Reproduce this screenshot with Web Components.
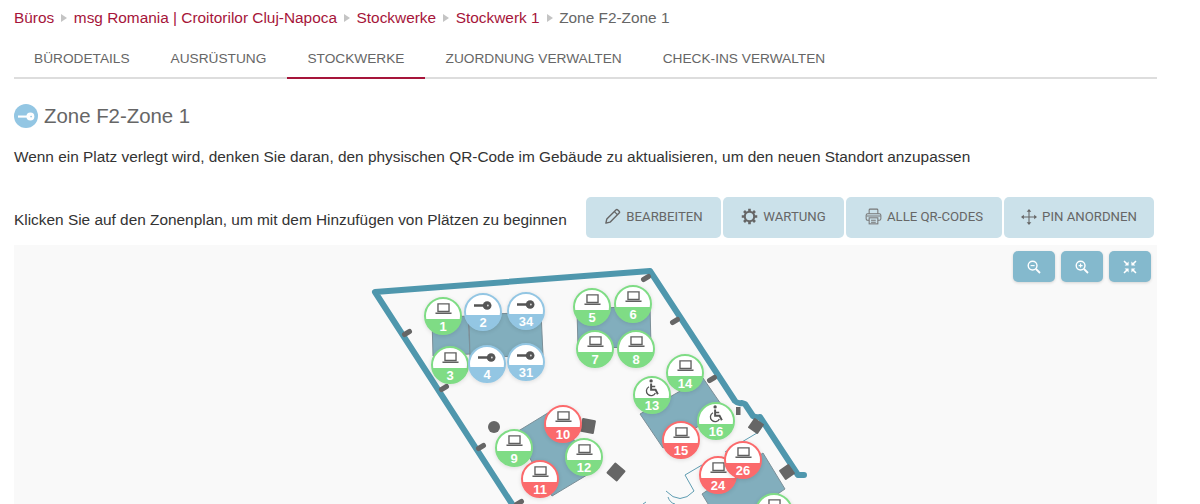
<!DOCTYPE html>
<html>
<head>
<meta charset="utf-8">
<style>
html,body{margin:0;background:#fff;}
body{font-family:"Liberation Sans",Arial,sans-serif;height:504px;overflow:hidden;}
</style>
</head>
<body>
<office-page></office-page>
<script>
const icons = {
    laptop: `<svg viewBox="0 0 20 14" width="17" height="12"><path d="M3.5 1h13v9h-13z" fill="none" stroke="#606060" stroke-width="1.6"/><path d="M0.5 11h19v1.2q0 .8-1 .8h-17q-1 0-1-.8z" fill="#606060"/></svg>`,
    key: `<svg viewBox="0 0 24 12" width="18" height="9"><path d="M0 4.4h13v3.2H0z" fill="#555"/><circle cx="17.5" cy="6" r="5.8" fill="#555"/><circle cx="18.5" cy="6" r="1.2" fill="#ddd"/></svg>`,
    wheel: `<svg viewBox="0 0 18 20" width="16" height="18"><circle cx="8" cy="2" r="1.9" fill="#555"/><path d="M8 5v7h5l2.6 5" fill="none" stroke="#555" stroke-width="2.2"/><path d="M8 8.4h4.6" stroke="#555" stroke-width="1.6"/><path d="M5.6 8.6a5.3 5.3 0 1 0 7.2 7" fill="none" stroke="#555" stroke-width="1.5"/></svg>`,
    pencil: `<svg viewBox="0 0 18 18" width="17" height="17"><path d="M2 16l1-4.4L12.6 2q1-1 2 0l1.4 1.4q1 1 0 2L6.4 15z" fill="none" stroke="#666" stroke-width="1.5" stroke-linejoin="round"/><path d="M11 3.8l3.2 3.2" stroke="#666" stroke-width="1.3"/></svg>`,
    gear: `<svg viewBox="0 0 18 18" width="17" height="17"><circle cx="9" cy="9" r="5" fill="none" stroke="#666" stroke-width="2.2"/><path d="M9 .8v3M9 14.2v3M.8 9h3M14.2 9h3M3.2 3.2l2.1 2.1M12.7 12.7l2.1 2.1M3.2 14.8l2.1-2.1M12.7 5.3l2.1-2.1" stroke="#666" stroke-width="2.8"/></svg>`,
    printer: `<svg viewBox="0 0 18 18" width="17" height="17" fill="none" stroke="#777" stroke-width="1.1"><path d="M4.4 6V2.2q0-1 1-1h7.2q1 0 1 1V6"/><rect x="1.2" y="6" width="15.6" height="7" rx="1.6"/><rect x="4.4" y="10.4" width="9.2" height="6.4" fill="#cbe1ea"/><path d="M6.4 13h5M6.4 15h5M1.5 8.4h15"/></svg>`,
    move: `<svg viewBox="0 0 18 18" width="16" height="16"><path d="M9 2v14M2 9h14" stroke="#666" stroke-width="1.2"/><path d="M9 0l2.6 3.2H6.4zM9 18l2.6-3.2H6.4zM0 9l3.2-2.6v5.2zM18 9l-3.2-2.6v5.2z" fill="#666"/></svg>`,
    zoomout: `<svg viewBox="0 0 14 14" width="14" height="14" fill="none" stroke="#fff" stroke-width="1.4"><circle cx="5.6" cy="5.6" r="4.4"/><path d="M9 9l4 4" stroke-width="1.8"/><path d="M3.6 5.6h4" stroke-width="1.1"/></svg>`,
    zoomin: `<svg viewBox="0 0 14 14" width="14" height="14" fill="none" stroke="#fff" stroke-width="1.4"><circle cx="5.6" cy="5.6" r="4.4"/><path d="M9 9l4 4" stroke-width="1.8"/><path d="M3.6 5.6h4M5.6 3.6v4" stroke-width="1.1"/></svg>`,
    compress: `<svg viewBox="0 0 14 14" width="14" height="14"><path d="M1 1l3.4 3.4M13 1L9.6 4.4M1 13l3.4-3.4M13 13L9.6 9.6" stroke="#fff" stroke-width="1.5"/><path d="M5.6 1.6v4h-4zM8.4 1.6v4h4zM5.6 12.4v-4h-4zM8.4 12.4v-4h4z" fill="#fff"/></svg>`
}

class BreadCrumbs extends HTMLElement
{
    constructor() {
        super()
        this._shadowRoot = this.attachShadow({ mode: 'open' })
        const items = ['Büros','msg Romania | Croitorilor Cluj-Napoca','Stockwerke','Stockwerk 1']
        this._shadowRoot.innerHTML = `<style>
        :host{display:flex;align-items:center;height:36px;font-size:15.4px;color:#666;}
        a{color:#a6153a;text-decoration:none;}
        i{width:0;height:0;border-left:6px solid #c4c4c4;border-top:4px solid transparent;border-bottom:4px solid transparent;margin:0 6.6px 0 7px;}
        </style>
        ${items.map(x => `<a href="#">${x}</a><i></i>`).join('')}<span>Zone F2-Zone 1</span>`
    }
}
window.customElements.define('bread-crumbs', BreadCrumbs)

class TabBar extends HTMLElement
{
    constructor() {
        super()
        this._shadowRoot = this.attachShadow({ mode: 'open' })
        const tabs = ['BÜRODETAILS','AUSRÜSTUNG','STOCKWERKE','ZUORDNUNG VERWALTEN','CHECK-INS VERWALTEN']
        this._shadowRoot.innerHTML = `<style>
        :host{display:flex;height:41px;border-bottom:2px solid #ddd;box-sizing:content-box;width:1143px;}
        div{box-sizing:content-box;padding:4px 20px 0;line-height:37px;height:37px;font-size:13.7px;color:#666;margin-right:1px;}
        .on{border-bottom:2px solid #a6153a;}
        </style>
        ${tabs.map(x => `<div class="${x==='STOCKWERKE'?'on':''}">${x}</div>`).join('')}`
    }
}
window.customElements.define('tab-bar', TabBar)

class ToolButton extends HTMLElement
{
    constructor() {
        super()
        this._shadowRoot = this.attachShadow({ mode: 'open' })
        this._shadowRoot.innerHTML = `<style>
        :host{display:flex;align-items:center;justify-content:center;gap:5px;height:41px;padding-bottom:2px;background:#cbe1ea;border-radius:5px;font-size:13.2px;color:#666;font-family:Roboto,sans-serif;box-sizing:border-box;}
        svg{display:block;}
        </style>
        ${icons[this.getAttribute('icon')]}<slot></slot>`
    }
}
window.customElements.define('tool-button', ToolButton)

class ZoomButton extends HTMLElement
{
    constructor() {
        super()
        this._shadowRoot = this.attachShadow({ mode: 'open' })
        this._shadowRoot.innerHTML = `<style>
        :host{display:flex;align-items:center;justify-content:center;width:42px;height:31px;background:#84b9cd;border-radius:5px;box-shadow:0 1px 3px rgba(0,0,0,.15);}
        </style>
        ${icons[this.getAttribute('icon')]}`
    }
}
window.customElements.define('zoom-button', ZoomButton)

class MapPin extends HTMLElement
{
    constructor() {
        super()
        this._shadowRoot = this.attachShadow({ mode: 'open' })
        const colors = {green:'#7fdc85',blue:'#93c6e3',red:'#fb6a6c'}
        const c = colors[this.getAttribute('status')]
        this._shadowRoot.innerHTML = `<style>
        :host{position:absolute;left:calc(var(--x)*1px - 19px);top:calc(var(--y)*1px - 19px);width:38px;height:38px;border-radius:50%;border:2px solid ${c};box-sizing:border-box;background:linear-gradient(#fff 0,#fff 58%,${c} 58%);display:flex;flex-direction:column;align-items:center;overflow:hidden;box-shadow:0 1px 4px rgba(0,0,0,.12);}
        .ic{height:20px;display:flex;align-items:center;justify-content:center;flex:none;}
        .n{font:bold 13px/14px "Liberation Sans",sans-serif;color:#fff;margin-top:1px;}
        </style>
        <div class="ic">${icons[this.getAttribute('icon')]}</div><div class="n"><slot></slot></div>`
    }
}
window.customElements.define('map-pin', MapPin)

class FloorMap extends HTMLElement
{
    constructor() {
        super()
        this._shadowRoot = this.attachShadow({ mode: 'open' })
        // page coords, map starts at 14,245
        const pins = [
            [1,443,316,'green','laptop'],[2,483,312,'blue','key'],[34,526,311,'blue','key'],
            [3,450,365,'green','laptop'],[4,487,364,'blue','key'],[31,526,362,'blue','key'],
            [5,592,307,'green','laptop'],[6,633,304,'green','laptop'],[7,595,349,'green','laptop'],[8,636,349,'green','laptop'],
            [10,563,424,'red','laptop'],[9,514,448,'green','laptop'],[12,584,457,'green','laptop'],[11,540,479,'red','laptop'],
            [14,685,373,'green','laptop'],[13,652,395,'green','wheel'],[16,716,421,'green','wheel'],[15,681,440,'red','laptop'],
            [24,718,475,'red','laptop'],[26,743,460,'red','laptop'],['',774,512,'green','laptop']
        ]
        const ticks = [[646,278],[407,333],[444,388],[481,447],[519,503],[675,321],[712,379]]
        this._shadowRoot.innerHTML = `<style>
        :host{display:block;position:relative;height:259px;width:1143px;background:#f9f9f9;overflow:hidden;}
        svg.plan{position:absolute;left:-14px;top:-245px;}
        .zoom{position:absolute;top:6px;right:6px;display:flex;gap:6px;}
        .pins{position:absolute;left:-14px;top:-245px;}
        </style>
        <svg class="plan" width="1200" height="504">
          <g fill="#82aebd" stroke="#7b8f98" stroke-width="1" stroke-linejoin="round">
            <path d="M432 318L468 316 470 354 433 356z"/>
            <path d="M469 315L541 312 543 355 470 358z"/>
            <path d="M577 310L650 305 651 347 578 348z"/>
            <path d="M515 433L552 496 592 472 556 408z"/>
            <path d="M640 414L663 448 725 410 703 378z"/>
            <path d="M702 494L763 453 785 489 724 530z"/>
          </g>
          <path d="M702 465L685 475 694 491Q680 506 666 491M668 497Q670 503 675 504M643 504L646 502M725 452L757 433" fill="none" stroke="#5f9db2" stroke-width="1"/>
          <path d="M512 504L375 292 650 271 735 401Q738 404 742 403L745 404 753 416Q756 418 760 417L798 475H804" fill="none" stroke="#4f97ad" stroke-width="6" stroke-linejoin="round" stroke-linecap="round"/>
          <g fill="none" stroke="#666" stroke-width="5" stroke-linecap="round">
            ${ticks.map(t => `<path d="M${t[0]-2.5} ${t[1]+1.5}L${t[0]+2.5} ${t[1]-1.5}"/>`).join('')}
          </g>
          <g fill="#666">
            <circle cx="494" cy="427" r="6"/>
            <rect x="581" y="419" width="14" height="14" rx="1" transform="rotate(10 588 426)"/>
            <rect x="609" y="465" width="14" height="14" rx="1" transform="rotate(40 616 472)"/>
            <rect x="750" y="420" width="12" height="12" rx="1" transform="rotate(35 756 426)"/>
            <rect x="781" y="466" width="12" height="12" rx="1" transform="rotate(-35 787 472)"/>
            <rect x="736" y="407" width="4.5" height="8"/>
          </g>
        </svg>
        <div class="pins">${pins.map(p => `<map-pin status="${p[3]}" icon="${p[4]}" style="--x:${p[1]};--y:${p[2]}">${p[0]}</map-pin>`).join('')}</div>
        <div class="zoom"><zoom-button icon="zoomout"></zoom-button><zoom-button icon="zoomin"></zoom-button><zoom-button icon="compress"></zoom-button></div>`
    }
}
window.customElements.define('floor-map', FloorMap)

class OfficePage extends HTMLElement
{
    constructor() {
        super()
        this._shadowRoot = this.attachShadow({ mode: 'open' })
        this._shadowRoot.innerHTML = `<style>
        :host{display:block;padding-left:14px;color:#333;font-family:"Liberation Sans",Arial,sans-serif;}
        .title{display:flex;align-items:center;gap:6px;margin-top:24px;height:26px;font-size:20.4px;color:#666;}
        .badge{width:24px;height:24px;border-radius:50%;background:#93c6e3;display:flex;align-items:center;justify-content:center;}
        p{margin:20px 0 0;font-size:15.4px;line-height:16px;color:#333;}
        .bar{display:flex;align-items:center;justify-content:space-between;margin-top:32px;width:1140px;height:41px;}
        .btns{display:flex;gap:2px;}
        .bar span{font-size:15.4px;padding-top:4px;}
        .b1{width:135px}.b2{width:121px}.b3{width:156px}.b4{width:150px}
        floor-map{margin-top:7px;}
        </style>
        <bread-crumbs></bread-crumbs>
        <tab-bar></tab-bar>
        <div class="title"><div class="badge"><svg viewBox="0 0 24 12" width="17" height="9"><path d="M0 4.6h13v3H0z" fill="#fff"/><circle cx="17.5" cy="6" r="5.6" fill="#fff"/><circle cx="18.5" cy="6" r="1.2" fill="#93c6e3"/></svg></div>Zone F2-Zone 1</div>
        <p>Wenn ein Platz verlegt wird, denken Sie daran, den physischen QR-Code im Gebäude zu aktualisieren, um den neuen Standort anzupassen</p>
        <div class="bar"><span>Klicken Sie auf den Zonenplan, um mit dem Hinzufügen von Plätzen zu beginnen</span>
        <div class="btns">
          <tool-button class="b1" icon="pencil">BEARBEITEN</tool-button>
          <tool-button class="b2" icon="gear">WARTUNG</tool-button>
          <tool-button class="b3" icon="printer">ALLE QR-CODES</tool-button>
          <tool-button class="b4" icon="move">PIN ANORDNEN</tool-button>
        </div></div>
        <floor-map></floor-map>`
    }
}
window.customElements.define('office-page', OfficePage)
</script>
</body>
</html>
